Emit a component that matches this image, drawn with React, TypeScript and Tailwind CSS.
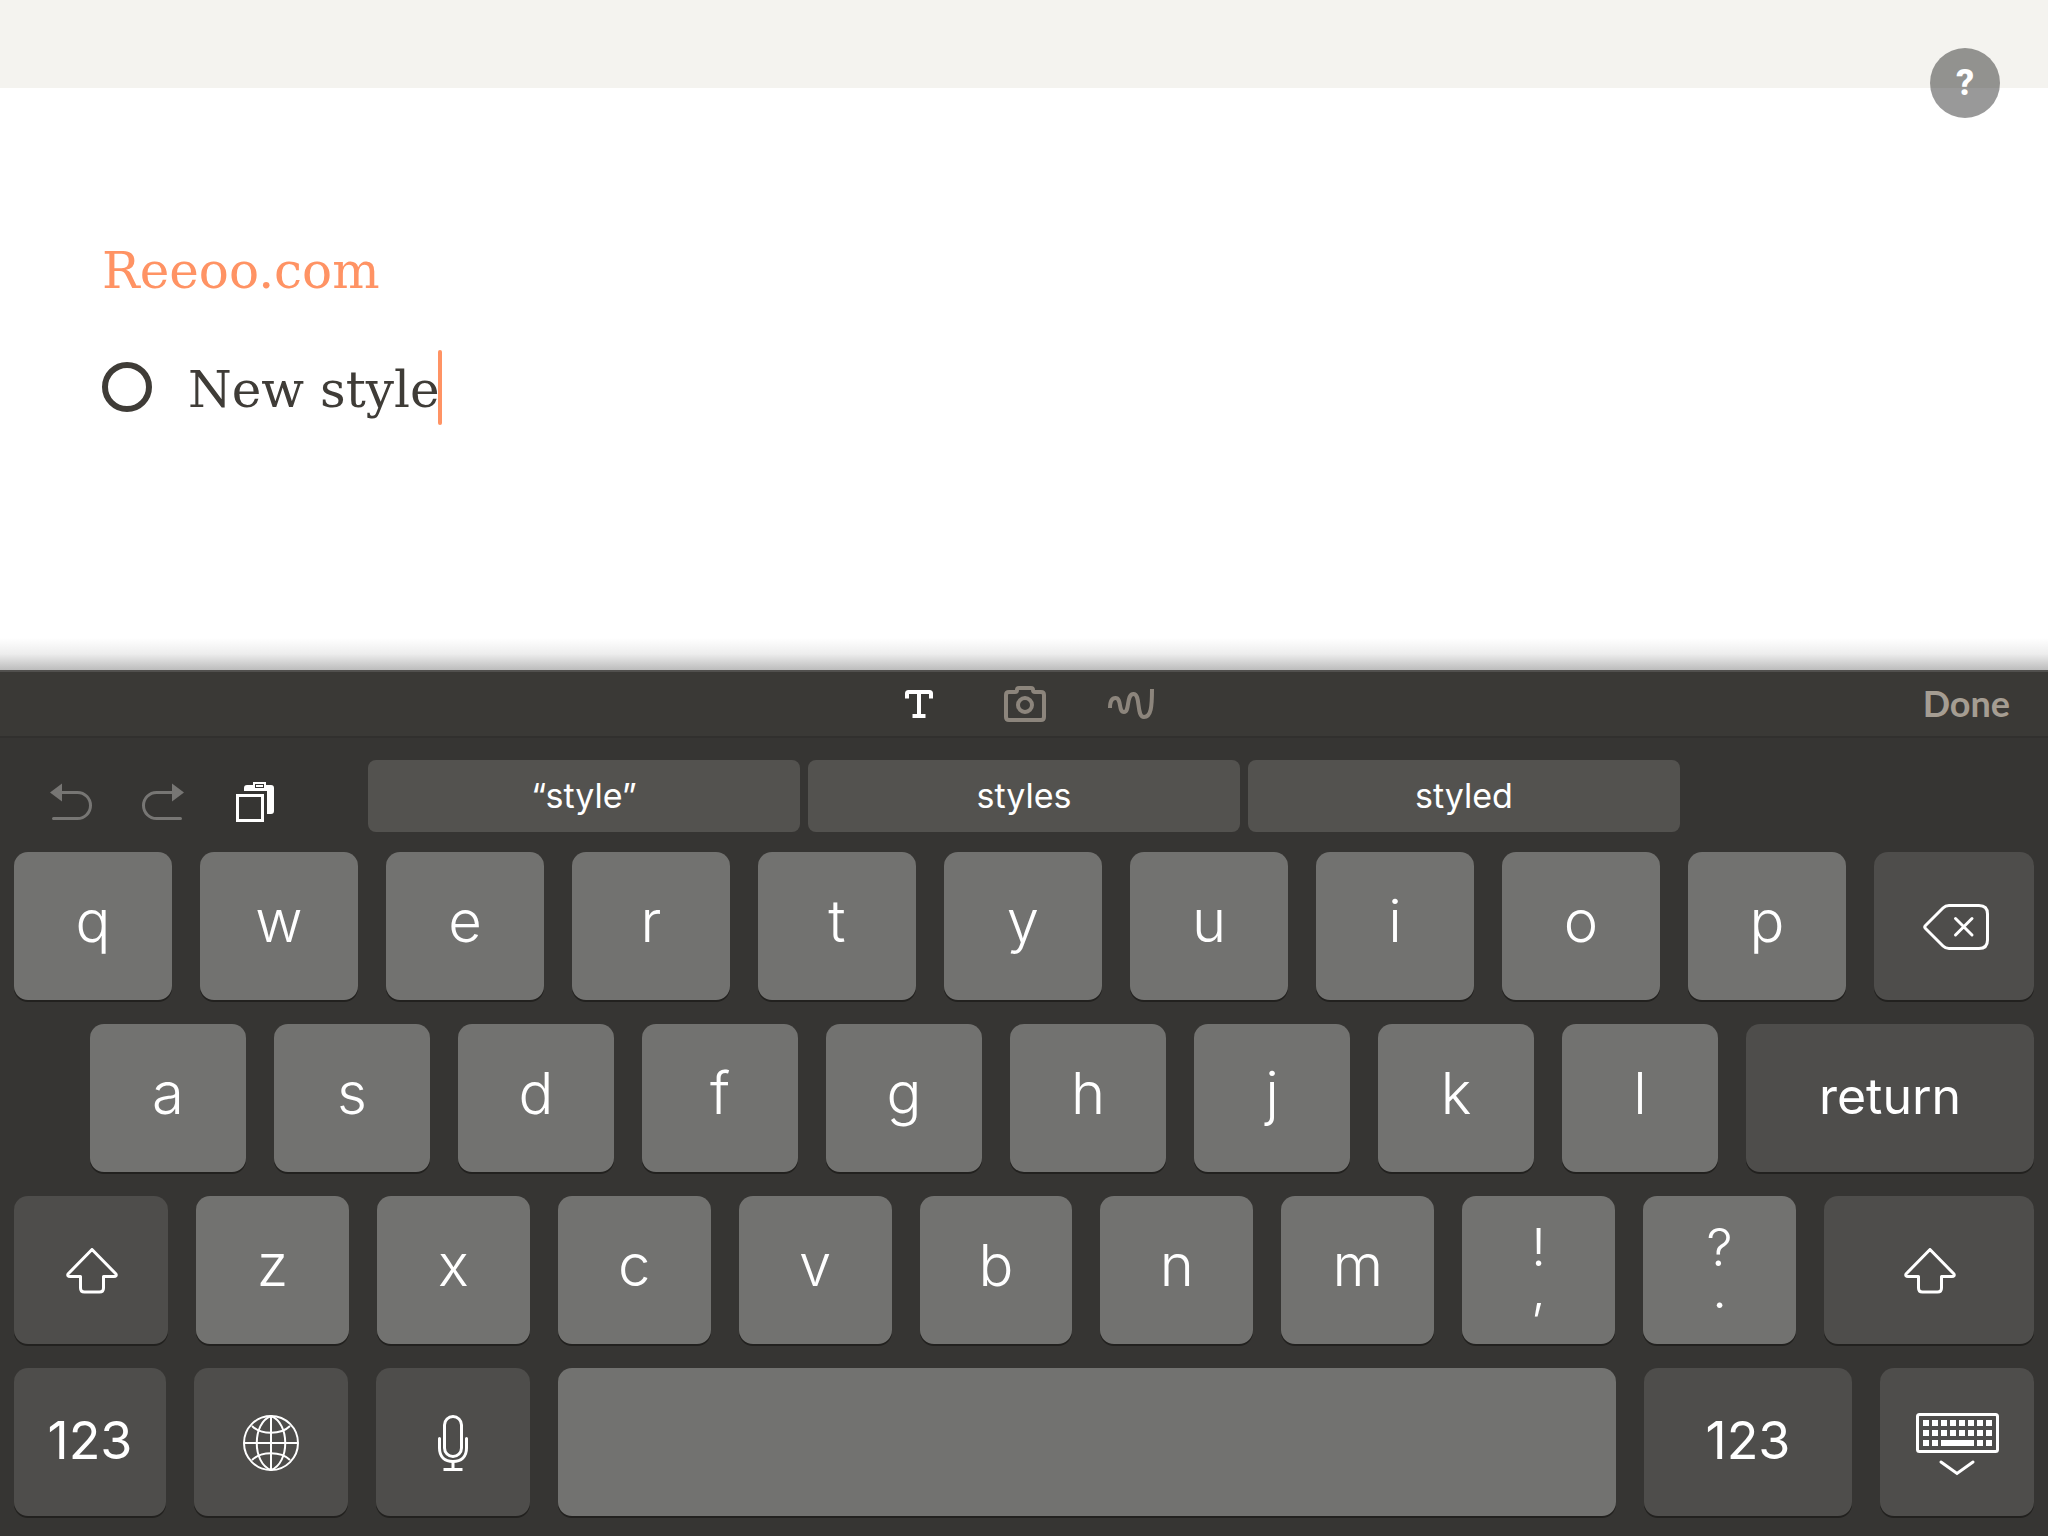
import type { ReactNode } from "react";
import { Type } from "lucide-react";

const topRow = ["q", "w", "e", "r", "t", "y", "u", "i", "o", "p"];
const homeRow = ["a", "s", "d", "f", "g", "h", "j", "k", "l"];
const bottomRow = ["z", "x", "c", "v", "b", "n", "m"];
const punctuation = [
  ["!", ","],
  ["?", "."],
];
const suggestions = ["“style”", "styles", "styled"];

type KeyProps = {
  children?: ReactNode;
  label?: string;
  className?: string;
};

function LetterKey({ children, label }: KeyProps) {
  return (
    <button
      type="button"
      aria-label={label}
      className="flex h-[148px] min-w-0 flex-1 items-center justify-center rounded-[14px] bg-[#727270] pb-[10px] text-[58px] leading-none font-[360] shadow-[0_2px_0_#22211f]"
    >
      {children}
    </button>
  );
}

function ActionKey({ children, label, className = "" }: KeyProps) {
  return (
    <button
      type="button"
      aria-label={label}
      className={`flex h-[148px] shrink-0 items-center justify-center rounded-[14px] bg-[#4e4d4b] leading-none shadow-[0_2px_0_#22211f] ${className}`}
    >
      {children}
    </button>
  );
}

function CameraIcon() {
  return (
    <svg width="42" height="36" viewBox="0 0 42 36" fill="none" stroke="currentColor" strokeWidth="4">
      <path d="M5 6H11Q13 6 13 4Q13 2 15 2H27Q29 2 29 4Q29 6 31 6H37Q40 6 40 9V31Q40 34 37 34H5Q2 34 2 31V9Q2 6 5 6Z" />
      <circle cx="21" cy="19" r="7" />
    </svg>
  );
}

function ScribbleIcon() {
  return (
    <svg width="46" height="32" viewBox="0 0 46 32" fill="none" stroke="currentColor" strokeWidth="4">
      <path d="M2 20C2 13 4 10 7.500 10C14 10 10 24 16 24C22 24 18 6 25.500 6C33 6 28 29 36 29C43 29 44 19 44 1" />
    </svg>
  );
}

function UndoIcon({ className = "" }: { className?: string }) {
  return (
    <svg width="42" height="38" viewBox="0 0 42 38" fill="none" className={className}>
      <path d="M10 9.500H27.500A13 13 0 0 1 27.500 35.500H3.500" stroke="currentColor" strokeWidth="3" strokeLinecap="round" />
      <path d="M0 9.500L12 0.500V18.500Z" fill="currentColor" />
    </svg>
  );
}

function PasteIcon() {
  return (
    <svg width="38" height="40" viewBox="0 0 38 40" fill="none">
      <path d="M8 9V6Q8 3 11 3H17V0H30V3H35Q38 3 38 6V29Q38 32 35 32H31V9Z" fill="white" />
      <rect x="19.500" y="2.500" width="8" height="3" stroke="#353432" />
      <rect x="1.500" y="13.500" width="25" height="25" stroke="white" strokeWidth="3" />
    </svg>
  );
}

function BackspaceIcon() {
  return (
    <svg width="66" height="46" viewBox="0 0 66 46" fill="none" stroke="white" strokeWidth="3" strokeLinecap="round" strokeLinejoin="round">
      <path d="M26 1.500H56Q64.500 1.500 64.500 10V36Q64.500 44.500 56 44.500H26Q22.500 44.500 20 42L2.500 24.500Q1 23 2.500 21.500L20 4Q22.500 1.500 26 1.500Z" />
      <path d="M32.500 14.500L49 31M49 14.500L32.500 31" />
    </svg>
  );
}

function ShiftIcon() {
  return (
    <svg width="52" height="46" viewBox="0 0 52 46" fill="none" stroke="white" strokeWidth="3" strokeLinejoin="round">
      <path d="M26 1.500L50 26Q51 28.500 48 28.500H37.500V40Q37.500 44 33.500 44H18.500Q14.500 44 14.500 40V28.500H4Q1 28.500 2 26Z" />
    </svg>
  );
}

function GlobeIcon() {
  return (
    <svg width="56" height="56" viewBox="0 0 56 56" fill="none" stroke="white" strokeWidth="2">
      <circle cx="28" cy="28" r="27" />
      <path d="M28 1V55M1 28H55" />
      <path d="M28 1C9 8 9 48 28 55M28 1C47 8 47 48 28 55" />
      <path d="M9 11C18 20 38 20 47 11M9 45C18 36 38 36 47 45" />
    </svg>
  );
}

function MicIcon() {
  return (
    <svg width="30" height="56" viewBox="0 0 30 56" fill="none" stroke="white" strokeWidth="3">
      <rect x="6.500" y="1.500" width="17" height="40" rx="8.500" />
      <path d="M1.500 23.500V33C1.500 42 7 46.500 15 46.500S28.500 42 28.500 33V23.500" strokeLinecap="round" />
      <path d="M15 47V54M5.500 54.500H24.500" />
    </svg>
  );
}

function HideKeyboardIcon() {
  const columns = [7, 16, 25, 34, 43, 52, 61, 70];
  return (
    <svg width="83" height="64" viewBox="0 0 83 64" fill="none">
      <rect x="1.500" y="1.500" width="80" height="37" rx="2" stroke="white" strokeWidth="3" />
      {columns.map((x) => (
        <g key={x} fill="white">
          <rect x={x} y="7" width="6" height="6" />
          <rect x={x} y="17" width="6" height="6" />
        </g>
      ))}
      <path d="M7 27H13V33H7ZM16 27H22V33H16ZM25 27H58V33H25ZM61 27H67V33H61ZM70 27H76V33H70Z" fill="white" />
      <path d="M25 49L41 60.500L57 49" stroke="white" strokeWidth="3" strokeLinecap="round" />
    </svg>
  );
}

export default function App() {
  return (
    <div className="flex min-h-screen flex-col bg-white font-['Inter',sans-serif]">
      {/* Page header */}
      <header className="relative h-[88px] bg-[#f4f3ef]">
        <button
          type="button"
          aria-label="Help"
          className="absolute top-12 right-12 flex size-[70px] items-center justify-center rounded-full bg-black/40 font-['Roboto',sans-serif] text-[36px] leading-none font-extrabold text-white"
        >
          ?
        </button>
      </header>

      {/* Note */}
      <main className="flex flex-1 flex-col px-[102px] pt-[148px] font-['DejaVu_Serif',serif] text-[50px] leading-[70px]">
        <h1 className="text-[#ff9364]">Reeoo.com</h1>
        <div className="mt-[43px] flex items-center text-[#3f3c37]">
          <input
            type="checkbox"
            aria-label="Mark New style as done"
            className="size-[50px] appearance-none rounded-full border-[6px] border-[#3f3c37]"
          />
          <input
            type="text"
            aria-label="List item"
            defaultValue="New style"
            className="ml-9 field-sizing-content bg-transparent pt-1.5 outline-none"
          />
          <span className="-ml-0.5 h-[75px] w-1 rounded-full bg-[#ff9364]" />
        </div>
      </main>
      <div className="h-8 bg-linear-to-b from-white via-[#ededed] to-[#bcbcbc]" />

      {/* Keyboard */}
      <section className="bg-[#363533] text-white">
        <div className="grid h-[68px] grid-cols-3 items-center border-t-2 border-b-2 border-t-[#51504e] border-b-[#31302e] bg-[#3a3936]">
          <div className="col-start-2 flex items-center justify-center gap-[62px] pl-0.5 text-[#8c857c]">
            <button type="button" aria-label="Text" className="flex w-[46px] justify-center text-white">
              <Type size={36} strokeWidth={4} absoluteStrokeWidth strokeLinecap="square" strokeLinejoin="miter" />
            </button>
            <button type="button" aria-label="Camera">
              <CameraIcon />
            </button>
            <button type="button" aria-label="Sketch">
              <ScribbleIcon />
            </button>
          </div>
          <button
            type="button"
            className="mr-[38px] justify-self-end pb-0.5 font-['Lato',sans-serif] text-[36px] leading-none font-bold text-[#a59d92]"
          >
            Done
          </button>
        </div>

        <div className="grid grid-cols-[340px_1fr_340px] px-7 pt-[22px]">
          <div className="flex items-center gap-[50px] pt-3 pl-[22px] text-[#777674]">
            <button type="button" aria-label="Undo">
              <UndoIcon />
            </button>
            <button type="button" aria-label="Redo">
              <UndoIcon className="-scale-x-100" />
            </button>
            <button type="button" aria-label="Paste" className="pl-0.5">
              <PasteIcon />
            </button>
          </div>
          <div className="grid grid-cols-3 gap-2">
            {suggestions.map((word) => (
              <button
                key={word}
                type="button"
                className="h-[72px] rounded-lg bg-[#53524f] text-[34px] leading-none"
              >
                {word}
              </button>
            ))}
          </div>
        </div>

        <div className="flex flex-col gap-6 px-[14px] pt-5 pb-5">
          <div className="flex gap-7">
            {topRow.map((letter) => (
              <LetterKey key={letter}>{letter}</LetterKey>
            ))}
            <ActionKey label="Delete" className="w-[160px] pt-0.5 pl-1">
              <BackspaceIcon />
            </ActionKey>
          </div>

          <div className="flex gap-7 pl-[76px]">
            {homeRow.map((letter) => (
              <LetterKey key={letter}>{letter}</LetterKey>
            ))}
            <ActionKey className="w-[288px] pb-1 text-[50px]">return</ActionKey>
          </div>

          <div className="flex gap-7">
            <ActionKey label="Shift" className="w-[154px] pt-0.5 pl-0.5">
              <ShiftIcon />
            </ActionKey>
            {bottomRow.map((letter) => (
              <LetterKey key={letter}>{letter}</LetterKey>
            ))}
            {punctuation.map(([upper, lower]) => (
              <LetterKey key={upper}>
                <span className="mt-2 text-[52px] leading-[42px]">
                  {upper}
                  <br />
                  {lower}
                </span>
              </LetterKey>
            ))}
            <ActionKey label="Shift" className="w-[210px] pt-0.5 pl-0.5">
              <ShiftIcon />
            </ActionKey>
          </div>

          <div className="flex gap-7">
            <ActionKey className="w-[152px] pb-0.5 text-[52px]">123</ActionKey>
            <ActionKey label="Next keyboard" className="w-[154px] pt-0.5">
              <GlobeIcon />
            </ActionKey>
            <ActionKey label="Dictate" className="w-[154px] pt-0.5">
              <MicIcon />
            </ActionKey>
            <LetterKey label="Space" />
            <ActionKey className="w-[208px] pb-0.5 text-[52px]">123</ActionKey>
            <ActionKey label="Hide keyboard" className="w-[154px] pt-1.5">
              <HideKeyboardIcon />
            </ActionKey>
          </div>
        </div>
      </section>
    </div>
  );
}
